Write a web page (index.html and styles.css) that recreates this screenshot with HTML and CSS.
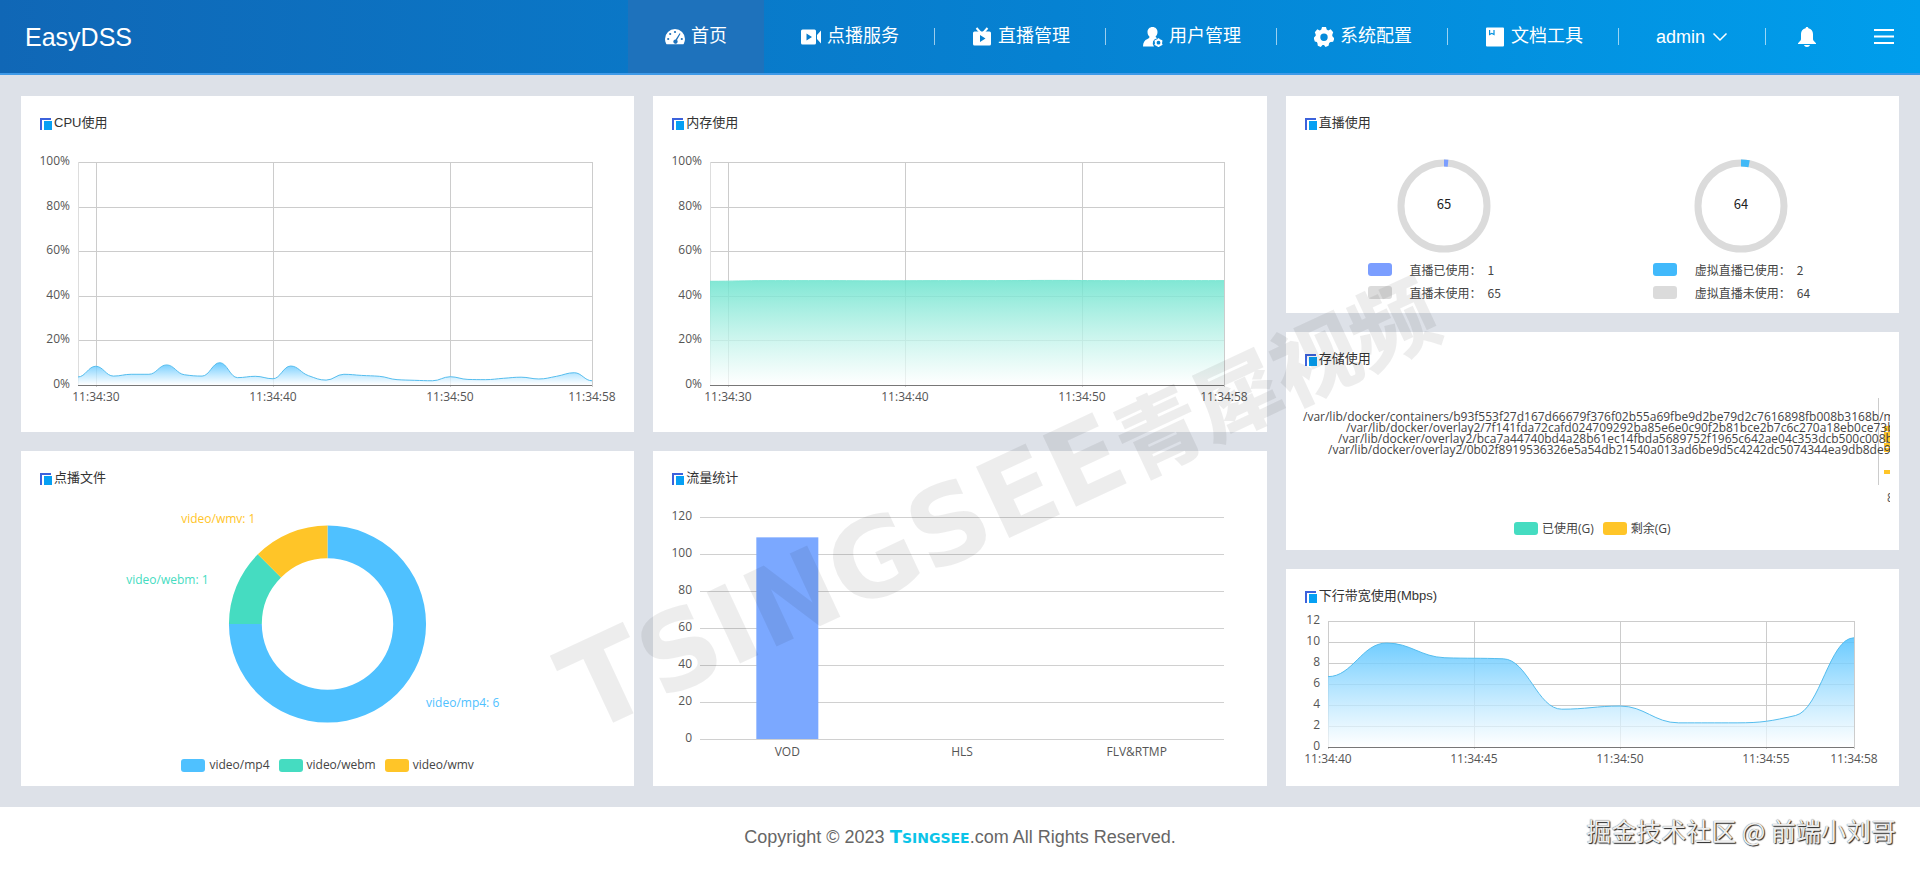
FILE: index.html
```html
<!DOCTYPE html>
<html lang="zh-CN">
<head>
	<title>EasyDSS</title>
	<meta charset="utf-8">
	<link rel="stylesheet" href="styles.css">
</head>
<body>
	<!--header start-->
	<header class="header">
		<a class="logo" href="#">EasyDSS</a>
		<nav class="nav">
			<a class="nav_item active" href="#">
				<svg class="icon" viewBox="0 0 20 20"><path fill="currentColor" d="M10 2a10 10 0 0 0-10 10c0 1.700.4 3.300 1.200 4.700.2.400.6.600 1 .600h15.600c.4 0 .8-.2 1-.6A9.800 9.800 0 0 0 20 12 10 10 0 0 0 10 2z"/><g fill="#1e72bc"><circle cx="10" cy="5" r="1.100"/><circle cx="5.200" cy="7" r="1.100"/><circle cx="3.200" cy="12" r="1.100"/><circle cx="16.800" cy="12" r="1.100"/><path d="M14.600 6.200l.9.500-3.500 6.300a2.200 2.200 0 1 1-1.400-.6z"/></g></svg>
				<span>首页</span>
			</a>
			<a class="nav_item" href="#">
				<svg class="icon" viewBox="0 0 20 20"><path fill="currentColor" fill-rule="evenodd" d="M1.500 2.500h12A1.500 1.500 0 0 1 15 4v12a1.500 1.500 0 0 1-1.500 1.500h-12A1.500 1.500 0 0 1 0 16V4a1.500 1.500 0 0 1 1.500-1.500zM5.500 6.500v7l5.500-3.500zM16 8l4-4.500v13L16 12z"/></svg>
				<span>点播服务</span>
			</a>
			<a class="nav_item" href="#">
				<svg class="icon" viewBox="0 0 20 20"><path fill="none" stroke="currentColor" stroke-width="2" d="M4.500 1l4 4.500M15.500 1l-4 4.500"/><path fill="currentColor" fill-rule="evenodd" d="M2.500 4.500h15A1.500 1.500 0 0 1 19 6v11a1.500 1.500 0 0 1-1.500 1.500h-15A1.500 1.500 0 0 1 1 17V6a1.500 1.500 0 0 1 1.500-1.500zM8 8v7l5.500-3.500z"/></svg>
				<span>直播管理</span>
			</a>
			<a class="nav_item" href="#">
				<svg class="icon" viewBox="0 0 20 20"><path fill="currentColor" d="M9.500 0c3 0 5 2.200 5 5 0 2-.8 3.600-2 4.800.2.600.8 1 1.800 1.400a5 5 0 0 0-3.300 8.300H0c0-4 1.500-6.300 4.500-7.500 1.300-.6 2-1.200 2-2.200-1.200-1.200-2-2.800-2-4.800 0-2.800 2-5 5-5z"/><circle cx="15.500" cy="15.700" r="2.800" fill="none" stroke="currentColor" stroke-width="1.800"/><path stroke="currentColor" stroke-width="1.600" d="M15.500 11.300v1.500M15.500 18.500V20M11.700 13.500l1.300.8M18 17.100l1.300.8M11.700 17.900l1.300-.8M18 14.300l1.300-.8"/></svg>
				<span>用户管理</span>
			</a>
			<a class="nav_item" href="#">
				<svg class="icon" viewBox="0 0 20 20"><path fill="currentColor" fill-rule="evenodd" d="M8 0h4l.7 2.600 1.500.8L16.700 2.300l2.500 3-1 2.600.2 1.300L20 11v1.500l-.9 2.200-2.600.2-1.300 1.100-.7 2.800-3 1.200-1.500-2-1.500.0-1.700 2-3-1.300-.4-2.700L2.800 14.900.8 14.600 0 12v-1.500l1.700-1.800V7.500L.8 5.300l2.500-3 2.500 1.100 1.500-.8zM10 6.500a3.700 3.700 0 1 0 0 7.400 3.700 3.700 0 0 0 0-7.400z"/></svg>
				<span>系统配置</span>
			</a>
			<a class="nav_item" href="#">
				<svg class="icon" viewBox="0 0 20 20"><path fill="currentColor" fill-rule="evenodd" d="M2 .5h16a1 1 0 0 1 1 1v17a1 1 0 0 1-1 1H2a1 1 0 0 1-1-1v-17a1 1 0 0 1 1-1zM4 3v5.500l2.800-1.500 2.800 1.500V3H8.400v3.500L6.800 5.800l-1.600.7V3z"/></svg>
				<span>文档工具</span>
			</a>
			<button class="nav_item user" type="button">
				<span>admin</span>
				<svg class="arrow" viewBox="0 0 16 16"><path fill="none" stroke="currentColor" stroke-width="1.500" d="M1.500 4.500l6.500 6.500 6.500-6.500"/></svg>
			</button>
		</nav>
		<button class="tool" type="button" aria-label="消息">
			<svg class="icon" viewBox="0 0 20 20"><path fill="currentColor" d="M10 0c.8 0 1.300.5 1.400 1.200C14.300 1.800 16 4 16 7v5c0 1.200.8 2.200 3 4.200v.8H1v-.8c2.200-2 3-3 3-4.200V7c0-3 1.700-5.200 4.600-5.800C8.700.5 9.200 0 10 0zM7 18h6c-.4 1.300-1.500 2-3 2s-2.600-.7-3-2z"/></svg>
		</button>
		<button class="tool menu" type="button" aria-label="菜单">
			<svg class="icon" viewBox="0 0 20 20"><path stroke="currentColor" stroke-width="2" d="M0 3h20M0 9.500h20M0 16h20"/></svg>
		</button>
	</header>
	<!--end header-->

	<!--main start-->
	<main class="main">
		<div class="column">
			<section class="card">
				<h2 class="card_title">CPU使用</h2>
				<div class="chart" id="cpu"></div>
			</section>
			<section class="card">
				<h2 class="card_title">点播文件</h2>
				<div class="chart" id="files"></div>
				<ul class="legend">
					<li><i class="swatch blue"></i>video/mp4</li>
					<li><i class="swatch green"></i>video/webm</li>
					<li><i class="swatch yellow"></i>video/wmv</li>
				</ul>
			</section>
		</div>
		<div class="column">
			<section class="card">
				<h2 class="card_title">内存使用</h2>
				<div class="chart" id="memory"></div>
			</section>
			<section class="card">
				<h2 class="card_title">流量统计</h2>
				<div class="chart" id="flow"></div>
			</section>
		</div>
		<div class="column">
			<section class="card">
				<h2 class="card_title">直播使用</h2>
				<div class="rings">
					<div class="ring_box">
						<svg class="ring" viewBox="0 0 94 94">
							<circle cx="47" cy="47" r="43" fill="none" stroke="#dbdbdb" stroke-width="7"/>
							<circle cx="47" cy="47" r="43" fill="none" stroke="#7b9eff" stroke-width="7" pathLength="66" stroke-dasharray="1 65" transform="rotate(-90 47 47)"/>
							<text class="ring_num" x="47" y="50">65</text>
						</svg>
						<dl class="usage">
							<dt><i class="swatch violet"></i>直播已使用：</dt><dd>1</dd>
							<dt><i class="swatch grey"></i>直播未使用：</dt><dd>65</dd>
						</dl>
					</div>
					<div class="ring_box">
						<svg class="ring" viewBox="0 0 94 94">
							<circle cx="47" cy="47" r="43" fill="none" stroke="#dbdbdb" stroke-width="7"/>
							<circle cx="47" cy="47" r="43" fill="none" stroke="#41b9f7" stroke-width="7" pathLength="66" stroke-dasharray="2 64" transform="rotate(-90 47 47)"/>
							<text class="ring_num" x="47" y="50">64</text>
						</svg>
						<dl class="usage">
							<dt><i class="swatch sky"></i>虚拟直播已使用：</dt><dd>2</dd>
							<dt><i class="swatch grey"></i>虚拟直播未使用：</dt><dd>64</dd>
						</dl>
					</div>
				</div>
			</section>
			<section class="card">
				<h2 class="card_title">存储使用</h2>
				<div class="chart" id="storage"></div>
				<ul class="legend">
					<li><i class="swatch green"></i>已使用(G)</li>
					<li><i class="swatch yellow"></i>剩余(G)</li>
				</ul>
			</section>
			<section class="card">
				<h2 class="card_title">下行带宽使用(Mbps)</h2>
				<div class="chart" id="band"></div>
			</section>
		</div>
	</main>
	<!--end main-->

	<footer class="footer">
		<p>Copyright © 2023 <a class="brand" href="#"><b>T</b>SINGSEE</a>.com All Rights Reserved.</p>
	</footer>

	<div class="watermark"><b>T</b>SINGSEE<span>青犀视频</span></div>
	<div class="signature">掘金技术社区 @ 前端小刘哥</div>

	<script src="charts.js"></script>
</body>
</html>
```

FILE: styles.css
```css
*{margin:0;padding:0;box-sizing:border-box;}
body{position:relative;display:flex;flex-direction:column;min-height:100vh;overflow-x:hidden;background:#dde1e8;color:#333;font-family:"Liberation Sans","Noto Sans CJK SC",sans-serif;font-size:13px;}
a{color:inherit;text-decoration:none;}
ul{list-style:none;}
button{border:0;background:none;color:inherit;font:inherit;cursor:pointer;}

/*header*/
.header{display:flex;height:75px;border-bottom:2px solid #3f9ae8;background:linear-gradient(to right,#1067b6,#0682d2 55%,#009eec);color:#fff;font-size:18px;}
.logo{margin-right:auto;padding-left:25px;font-size:25px;line-height:74px;}
.nav{display:flex;}
.nav_item{position:relative;display:flex;align-items:center;gap:6px;padding:0 36px 0 37px;line-height:24px;white-space:nowrap;}
.nav_item span{padding-bottom:2px;}
.nav_item::after{content:"";position:absolute;right:0;top:28px;width:1px;height:17px;background:rgba(255,255,255,.6);}
.nav_item.active{padding:0 37px;background:#1e72bc;}
.nav_item.active::after{display:none;}
.nav_item.user{gap:7px;padding-right:38px;}
.nav_item.user span{padding-bottom:0;}
.icon{display:block;width:20px;height:20px;}
.arrow{display:block;width:16px;height:16px;}
.tool{display:flex;align-items:center;padding:0 31px;}
.tool.menu{padding:0 26px;}

/*cards*/
.main{flex:1;display:grid;grid-template-columns:repeat(3,minmax(0,1fr));gap:19px;padding:21px;}
.column{display:flex;flex-direction:column;gap:19px;}
.card{flex:1 1 0;min-height:217px;display:flex;flex-direction:column;padding:9px;background:#fff;}
.card_title{position:relative;padding:8px 10px 1px 24px;font-size:13px;font-weight:normal;line-height:20px;}
.card_title::before{content:"";position:absolute;left:10px;top:13px;width:9px;height:10px;border:solid #3c62dc;border-width:2px 0 0 2px;}
.card_title::after{content:"";position:absolute;left:14px;top:16px;width:8px;height:9px;background:#06a0f3;}
.chart{flex:1;min-height:0;overflow:hidden;}
.chart svg{display:block;}
.chart text{font-family:"Open Sans","Noto Sans CJK SC",sans-serif;font-size:12px;fill:#555;}
.legend{display:flex;justify-content:center;gap:9px;padding-bottom:5px;color:#444;font-family:"Open Sans","Noto Sans CJK SC",sans-serif;font-size:12px;line-height:14px;}
.legend li{display:flex;align-items:center;gap:4px;}
.swatch{display:inline-block;width:24px;height:13px;border-radius:3px;}
.blue{background:#4fc1ff;}
.green{background:#45dcc1;}
.yellow{background:#ffc528;}
.violet{background:#7b9eff;}
.sky{background:#41b9fb;}
.grey{background:#dbdbdb;}

/*live usage*/
.rings{flex:1;display:flex;padding:25px 0 0 1px;}
.ring_box{flex:1;display:flex;flex-direction:column;align-items:center;}
.ring{display:block;width:94px;height:94px;}
.ring_num{font-family:"Noto Sans CJK SC",sans-serif;font-size:13px;text-anchor:middle;fill:#222;}
.usage{display:grid;grid-template-columns:auto auto;column-gap:6px;margin-top:5px;padding-right:20px;color:#444;font-family:"Noto Sans CJK SC",sans-serif;font-size:12px;line-height:23px;}
.usage dt{display:flex;align-items:center;gap:18px;}

/*footer*/
.footer{height:62px;background:#fff;color:#666;text-align:center;font-size:18px;line-height:60px;}
.brand{color:#0cc4e8;font-family:"DejaVu Sans",sans-serif;font-size:14px;font-weight:bold;}
.brand b{font-size:18px;}

/*watermarks*/
.watermark{position:absolute;left:596px;top:632px;transform:rotate(-25deg);transform-origin:left bottom;color:rgba(0,0,0,.07);font-family:"DejaVu Sans",sans-serif;font-size:108px;font-weight:bold;line-height:120px;white-space:nowrap;pointer-events:none;}
.watermark b{font-size:120px;}
.watermark span{font-family:"Noto Sans CJK SC",sans-serif;font-size:86px;font-weight:900;}
.signature{position:absolute;right:24px;bottom:20px;color:#eee;font-family:"Noto Sans CJK SC",sans-serif;font-size:25px;line-height:38px;text-shadow:1px 1px 1px #222,0 0 1px #555;pointer-events:none;}
```

FILE: charts.js
```javascript
var cpuData = [3.6, 8.4, 4, 4.8, 4.8, 9, 4.6, 4, 10, 3.3, 3.9, 2.8, 8.5, 4.2, 2.2, 4.8, 4.3, 3.9, 2.4, 2.1, 1.9, 3.7, 2.5, 2.4, 3, 3.5, 2.7, 3.9, 5.5, 1.9];
var memoryData = [46.5, 46.8, 46.8, 46.7, 46.8, 46.8, 46.9, 46.8, 46.8, 46.8];
var bandData = [6.7, 9.9, 8.5, 8.4, 3.6, 3.9, 2.3, 2.3, 3, 10.4];

function text(x, y, str, anchor, color) {
	return '<text x="' + x + '" y="' + y + '" text-anchor="' + anchor + '"' + (color ? ' style="fill:' + color + '"' : '') + '>' + str + '</text>';
}

function line(x1, y1, x2, y2, color) {
	return '<path d="M' + x1 + ' ' + y1 + 'L' + x2 + ' ' + y2 + '" stroke="' + color + '" shape-rendering="crispEdges"/>';
}

function draw(id, fn) {
	var box = document.getElementById(id);
	box.innerHTML = "";
	var w = box.clientWidth, h = box.clientHeight;
	box.innerHTML = '<svg width="' + w + '" height="' + h + '">' + fn(w, h) + '</svg>';
}

//平滑曲线
function smooth(p) {
	var n = p.length, s = [], m = [], i;
	for (i = 0; i < n - 1; i++) {
		s[i] = (p[i + 1][1] - p[i][1]) / (p[i + 1][0] - p[i][0]);
	}
	m[0] = 0;
	m[n - 1] = 0;
	for (i = 1; i < n - 1; i++) {
		m[i] = s[i - 1] * s[i] <= 0 ? 0 : 2 * s[i - 1] * s[i] / (s[i - 1] + s[i]);
	}
	var d = "M" + p[0];
	for (i = 0; i < n - 1; i++) {
		var k = (p[i + 1][0] - p[i][0]) / 2.4;
		d += "C" + [p[i][0] + k, p[i][1] + m[i] * k, p[i + 1][0] - k, p[i + 1][1] - m[i + 1] * k, p[i + 1][0], p[i + 1][1]];
	}
	return d;
}

//面积图
function area(id, o) {
	draw(id, function(w, h) {
		var x0 = o.left, x1 = w - o.right, y0 = o.top, y1 = h - o.bottom, out = "", i, x, y;
		for (i = 0; i <= o.max; i += o.step) {
			y = Math.round(y1 - i / o.max * (y1 - y0));
			if (i) out += line(x0, y, x1, y, "#ccc");
			out += text(x0 - 8, y + 3, i + o.unit, "end");
		}
		out += line(x0, y0, x0, y1, "#ddd");
		for (i = 0; i < o.times.length; i++) {
			x = Math.round(x0 + (o.times[i] - o.from) / (58 - o.from) * (x1 - x0));
			out += line(x, y0, x, y1 + 2, "#ccc");
			out += text(x, y1 + 16, "11:34:" + o.times[i], "middle");
		}
		var p = o.data.map(function(v, n) {
			return [x0 + n * (x1 - x0) / (o.data.length - 1), y1 - v / o.max * (y1 - y0)];
		});
		var d = smooth(p);
		out += '<linearGradient id="g_' + id + '" x1="0" y1="0" x2="0" y2="1"><stop offset="0" stop-color="' + o.color + '" stop-opacity=".85"/><stop offset="1" stop-color="#fff" stop-opacity=".7"/></linearGradient>';
		out += '<path d="' + d + 'L' + x1 + ' ' + y1 + 'L' + x0 + ' ' + y1 + 'Z" fill="url(#g_' + id + ')"/>';
		out += '<path d="' + d + '" fill="none" stroke="' + o.stroke + '"/>';
		out += line(x0, y1, x1, y1, "#777");
		return out;
	});
}

//环形图
function pie(id, data) {
	draw(id, function(w, h) {
		var cx = w / 2, cy = h / 2, r = h * 0.365, r2 = r * 2 / 3, a = 0, out = "";
		data.forEach(function(d) {
			var b = a + d.value / 8 * Math.PI * 2, m = (a + b) / 2, big = b - a > Math.PI ? 1 : 0;
			function pt(rad, ang) {
				return (cx + rad * Math.sin(ang)) + " " + (cy - rad * Math.cos(ang));
			}
			out += '<path fill="' + d.color + '" d="M' + pt(r, a) + 'A' + r + ' ' + r + ' 0 ' + big + ' 1 ' + pt(r, b) + 'L' + pt(r2, b) + 'A' + r2 + ' ' + r2 + ' 0 ' + big + ' 0 ' + pt(r2, a) + 'Z"/>';
			var side = Math.sin(m) > 0 ? 1 : -1;
			out += text(cx + (r + 14) * Math.sin(m) + side * d.gap, cy - (r + 14) * Math.cos(m) + 3, d.name + ": " + d.value, side > 0 ? "start" : "end", d.color);
			a = b;
		});
		return out;
	});
}

//柱状图
function bars(id) {
	var names = ["VOD", "HLS", "FLV&amp;RTMP"], values = [109, 0, 0];
	draw(id, function(w, h) {
		var x0 = 38, x1 = w - 33, y0 = 28, y1 = h - 39, cell = (x1 - x0) / 3, out = "";
		for (var i = 0; i <= 120; i += 20) {
			var y = Math.round(y1 - i / 120 * (y1 - y0));
			out += line(x0, y, x1, y, "#d0d0d0");
			out += text(x0 - 8, y + 3, i, "end");
		}
		names.forEach(function(name, n) {
			var c = x0 + cell * (n + 0.5), bh = values[n] / 120 * (y1 - y0);
			out += '<rect x="' + (c - 31) + '" y="' + (y1 - bh) + '" width="62" height="' + bh + '" fill="#7ba8ff"/>';
			out += text(c, y1 + 17, name, "middle");
		});
		return out;
	});
}

//存储
function storage(id) {
	var rows = [
		[8, "/var/lib/docker/containers/b93f553f27d167d66679f376f02b55a69fbe9d2be79d2c7616898fb008b3168b/mounts/shm"],
		[51, "/var/lib/docker/overlay2/7f141fda72cafd024709292ba85e6e0c90f2b81bce2b7c6c270a18eb0ce73b"],
		[43, "/var/lib/docker/overlay2/bca7a44740bd4a28b61ec14fbda5689752f1965c642ae04c353dcb500c008b"],
		[33, "/var/lib/docker/overlay2/0b02f8919536326e5a54db21540a013ad6be9d5c4242dc5074344ea9db8de9"]
	];
	draw(id, function(w, h) {
		var out = line(w - 12, 28, w - 12, h - 36, "#ccc");
		[[56, 5], [62, 10], [73, 4], [78, 4], [100, 4]].forEach(function(b) {
			out += '<rect x="' + (w - 6) + '" y="' + b[0] + '" width="40" height="' + b[1] + '" fill="#ffc528"/>';
		});
		rows.forEach(function(row, n) {
			out += text(row[0], 51 + n * 11, row[1], "start", "#444");
		});
		out += text(w - 3, h - 19, "80", "start");
		return out;
	});
}

function render() {
	area("cpu", {left: 48, right: 33, top: 28, bottom: 38, max: 100, step: 20, unit: "%", from: 29, times: [30, 40, 50, 58], data: cpuData, color: "#4fc1ff", stroke: "#55bdee"});
	area("memory", {left: 48, right: 33, top: 28, bottom: 38, max: 100, step: 20, unit: "%", from: 29, times: [30, 40, 50, 58], data: memoryData, color: "#6be3cd", stroke: "#7be5d2"});
	area("band", {left: 33, right: 36, top: 14, bottom: 30, max: 12, step: 2, unit: "", from: 40, times: [40, 45, 50, 55, 58], data: bandData, color: "#4fc1ff", stroke: "#55bdee"});
	pie("files", [
		{name: "video/mp4", value: 6, color: "#4fc1ff", gap: 19},
		{name: "video/webm", value: 1, color: "#45dcc1", gap: 15},
		{name: "video/wmv", value: 1, color: "#ffc528", gap: 29}
	]);
	bars("flow");
	storage("storage");
}

render();
window.onresize = render;
```
